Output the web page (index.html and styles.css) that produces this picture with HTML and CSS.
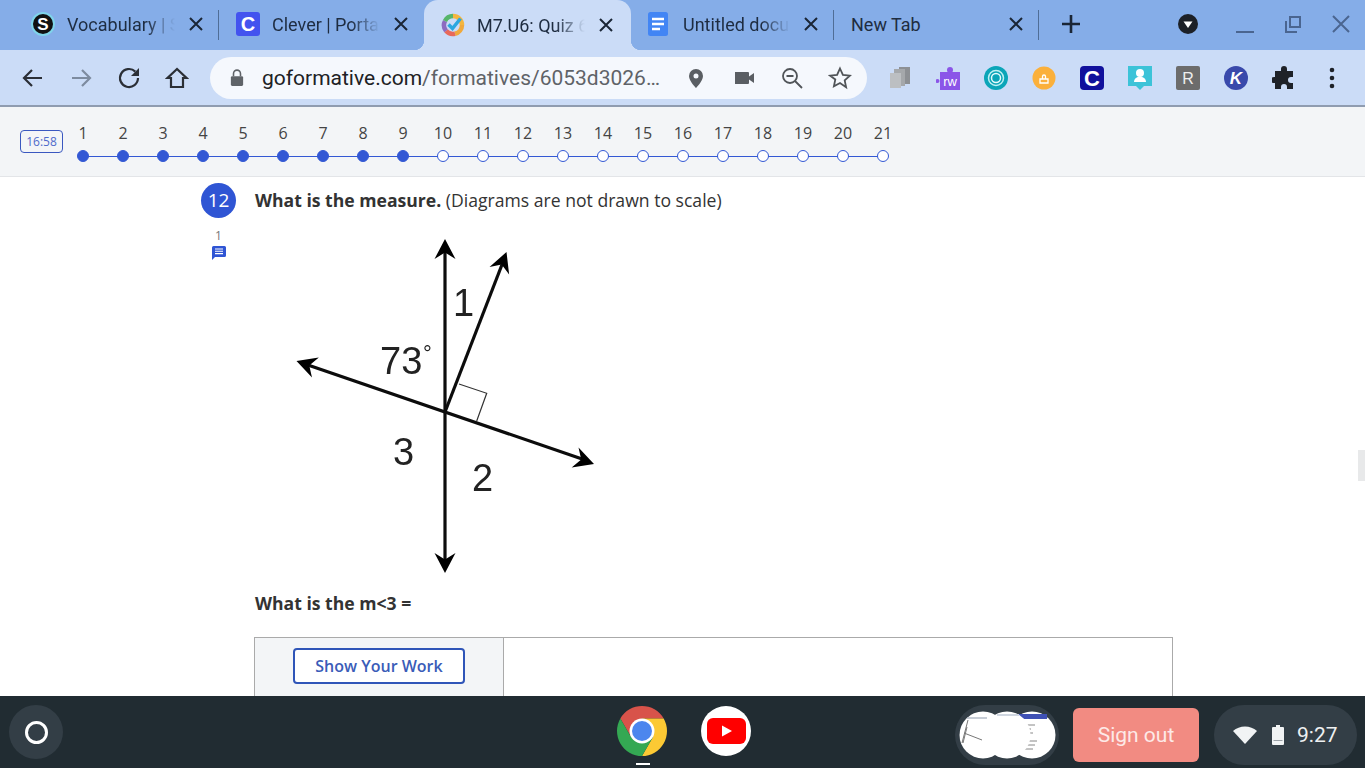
FILE: index.html
```html
<!DOCTYPE html>
<html lang="en">
<head>
<meta charset="utf-8">
<title>M7.U6: Quiz 6</title>
<link rel="stylesheet" href="styles.css">
</head>
<body>
<div class="screen">
  <header class="tabstrip">
    <div class="tab">
      <svg class="favicon" viewBox="0 0 24 24"><circle cx="12" cy="12" r="12" fill="#7fd4ea"/><circle cx="12" cy="12" r="10" fill="#111"/><text x="12" y="18" class="fav-s">S</text></svg>
      <span class="tab-title">Vocabulary | Scholastic</span>
      <svg class="tab-close" viewBox="0 0 14 14"><path d="M1 1l12 12M13 1L1 13"/></svg>
    </div>
    <div class="tab">
      <svg class="favicon" viewBox="0 0 24 24"><rect width="24" height="24" rx="3" fill="#4353ef"/><text x="12" y="19" class="fav-c">C</text></svg>
      <span class="tab-title">Clever | Portal</span>
      <svg class="tab-close" viewBox="0 0 14 14"><path d="M1 1l12 12M13 1L1 13"/></svg>
    </div>
    <div class="tab tab-active">
      <svg class="favicon" viewBox="0 0 24 24"><g fill="none" stroke-width="4.500"><path d="M12 3a9 9 0 0 1 9 9" stroke="#f4b63f"/><path d="M21 12a9 9 0 0 1-7 8.800" stroke="#f0a93c"/><path d="M14 20.800a9 9 0 0 1-9-3" stroke="#e8695a"/><path d="M5 17.800A9 9 0 0 1 4 8" stroke="#8c6bc0"/><path d="M4 8a9 9 0 0 1 8-5" stroke="#56b56a"/></g><path d="M7.500 11.500l4 4 8-10" fill="none" stroke="#2aa7e0" stroke-width="3.500"/></svg>
      <span class="tab-title">M7.U6: Quiz 6</span>
      <svg class="tab-close" viewBox="0 0 14 14"><path d="M1 1l12 12M13 1L1 13"/></svg>
    </div>
    <div class="tab">
      <svg class="favicon" viewBox="0 0 24 24"><rect x="2" width="20" height="24" rx="2.500" fill="#4285f4"/><path d="M6 7h12M6 12h12M6 17h8" stroke="#fff" stroke-width="2.600"/></svg>
      <span class="tab-title tab-title-shift">Untitled document</span>
      <svg class="tab-close" viewBox="0 0 14 14"><path d="M1 1l12 12M13 1L1 13"/></svg>
    </div>
    <div class="tab tab-new">
      <span class="tab-title">New Tab</span>
      <svg class="tab-close" viewBox="0 0 14 14"><path d="M1 1l12 12M13 1L1 13"/></svg>
    </div>
    <svg class="new-tab" viewBox="0 0 20 20"><path d="M10 1v18M1 10h18"/></svg>
    <svg class="tab-search" viewBox="0 0 20 20"><circle cx="10" cy="10" r="10" fill="#1c2027"/><path d="M5.500 7.500h9L10 14z" fill="#fff"/></svg>
    <div class="win-controls">
      <svg class="win-btn" viewBox="0 0 20 20"><path d="M1 18h18"/></svg>
      <svg class="win-btn" viewBox="0 0 20 20"><path d="M3 7v11h11M7 3h10v10H7z"/></svg>
      <svg class="win-btn" viewBox="0 0 20 20"><path d="M2 2l16 16M18 2L2 18"/></svg>
    </div>
  </header>

  <nav class="toolbar">
    <button class="tool"><svg viewBox="0 0 24 24"><path d="M21 12H4M11 4l-8 8 8 8"/></svg></button>
    <button class="tool tool-dim"><svg viewBox="0 0 24 24"><path d="M3 12h17M13 4l8 8-8 8"/></svg></button>
    <button class="tool"><svg viewBox="0 0 24 24"><path d="M21 12a9 9 0 1 1-2.700-6.400"/><path class="solid" d="M22 2v8h-8z"/></svg></button>
    <button class="tool"><svg viewBox="0 0 24 24"><path d="M12 3L2.500 12H6v9h12v-9h3.500z"/></svg></button>
    <div class="omnibox">
      <svg class="lock" viewBox="0 0 16 20"><path d="M4 8V5a4 4 0 0 1 8 0v3" fill="none" stroke="#5f6368" stroke-width="1.800"/><rect x="1" y="8" width="14" height="11" rx="1.500" fill="#5f6368"/></svg>
      <span class="url"><span class="url-host">goformative.com</span>/formatives/6053d3026…</span>
      <button class="tool omni-tool"><svg viewBox="0 0 24 24"><path class="solid" d="M12 3a7 7 0 0 0-7 7c0 5 7 12 7 12s7-7 7-12a7 7 0 0 0-7-7zm0 9.500a2.500 2.500 0 1 1 0-5 2.500 2.500 0 0 1 0 5z"/></svg></button>
      <button class="tool omni-tool"><svg viewBox="0 0 24 24"><path class="solid" d="M3 6h13a1 1 0 0 1 1 1v3.500L22 7v10l-5-3.500V17a1 1 0 0 1-1 1H3z"/></svg></button>
      <button class="tool omni-tool"><svg viewBox="0 0 24 24" class="thin"><circle cx="10" cy="10" r="7"/><path d="M15 15l7 7M6.500 10h7"/></svg></button>
      <button class="tool omni-tool"><svg viewBox="0 0 24 24" class="thin"><path d="M12 2.500l2.900 6.400 7 .8-5.200 4.700 1.400 6.900L12 17l-6.100 3.300 1.400-6.900L2.100 9.700l7-.8z"/></svg></button>
    </div>
    <div class="ext-row">
      <span class="ext"><svg viewBox="0 0 24 24"><rect x="11" y="1" width="11" height="17" fill="#8d9094"/><rect x="6" y="3" width="11" height="17" fill="#a5a8ab"/><rect x="2" y="7" width="11" height="15" fill="#bcbfc2"/></svg></span>
      <span class="ext"><svg viewBox="0 0 24 24"><rect x="4" y="6" width="20" height="18" fill="#8b55e8"/><circle cx="14" cy="4" r="3" fill="#8b55e8"/><circle cx="1.500" cy="15" r="2" fill="#8b55e8"/><text x="14" y="20" class="ext-rw">rw</text></svg></span>
      <span class="ext"><svg viewBox="0 0 24 24"><circle cx="12" cy="12" r="12" fill="#0ba5b8"/><circle cx="12" cy="12" r="7.500" fill="none" stroke="#bff0f3" stroke-width="1.500"/><circle cx="12" cy="12" r="4.500" fill="none" stroke="#e6fafb" stroke-width="1.500"/></svg></span>
      <span class="ext"><svg viewBox="0 0 24 24"><circle cx="12" cy="12" r="11.500" fill="#fbb03b"/><path d="M8 13h8v4H8zM10.500 13v-2.500a1.500 1.500 0 0 1 3 0V13" fill="none" stroke="#fff" stroke-width="1.300"/></svg></span>
      <span class="ext"><svg viewBox="0 0 24 24"><rect width="24" height="24" rx="4" fill="#10109c"/><text x="12" y="19.500" class="fav-c fav-c-large">C</text></svg></span>
      <span class="ext"><svg viewBox="0 0 24 24"><path d="M0 0h24v20h-8l-4 4-4-4H0z" fill="#3cc3d8"/><circle cx="12" cy="7" r="4" fill="#fff"/><path d="M6 16c0-7 12-7 12 0z" fill="#fff"/></svg></span>
      <span class="ext"><svg viewBox="0 0 24 24"><rect width="24" height="24" rx="2" fill="#6c6c6c"/><text x="12" y="18" class="ext-r">R</text></svg></span>
      <span class="ext"><svg viewBox="0 0 24 24"><circle cx="12" cy="12" r="12" fill="#3949ab"/><text x="12" y="18" class="ext-k">K</text></svg></span>
      <span class="ext"><svg viewBox="0 0 24 24"><path fill="#1e2228" d="M9 3a3 3 0 0 1 6 0v2h6v6h-2a3 3 0 0 0 0 6h2v6h-6v-2a3 3 0 0 0-6 0v2H3v-6h-1a3 3 0 0 1 0-6h1V5h6z"/></svg></span>
      <span class="ext"><svg viewBox="0 0 24 24"><circle cx="12" cy="4" r="2.300" fill="#1e2228"/><circle cx="12" cy="12" r="2.300" fill="#1e2228"/><circle cx="12" cy="20" r="2.300" fill="#1e2228"/></svg></span>
    </div>
  </nav>

  <section class="progress">
    <div class="timer">16:58</div>
    <ol class="steps">
      <li class="step done"><span class="num">1</span><span class="track"><i class="dot"></i></span></li>
      <li class="step done"><span class="num">2</span><span class="track"><i class="dot"></i></span></li>
      <li class="step done"><span class="num">3</span><span class="track"><i class="dot"></i></span></li>
      <li class="step done"><span class="num">4</span><span class="track"><i class="dot"></i></span></li>
      <li class="step done"><span class="num">5</span><span class="track"><i class="dot"></i></span></li>
      <li class="step done"><span class="num">6</span><span class="track"><i class="dot"></i></span></li>
      <li class="step done"><span class="num">7</span><span class="track"><i class="dot"></i></span></li>
      <li class="step done"><span class="num">8</span><span class="track"><i class="dot"></i></span></li>
      <li class="step done"><span class="num">9</span><span class="track"><i class="dot"></i></span></li>
      <li class="step"><span class="num">10</span><span class="track"><i class="dot"></i></span></li>
      <li class="step"><span class="num">11</span><span class="track"><i class="dot"></i></span></li>
      <li class="step"><span class="num">12</span><span class="track"><i class="dot"></i></span></li>
      <li class="step"><span class="num">13</span><span class="track"><i class="dot"></i></span></li>
      <li class="step"><span class="num">14</span><span class="track"><i class="dot"></i></span></li>
      <li class="step"><span class="num">15</span><span class="track"><i class="dot"></i></span></li>
      <li class="step"><span class="num">16</span><span class="track"><i class="dot"></i></span></li>
      <li class="step"><span class="num">17</span><span class="track"><i class="dot"></i></span></li>
      <li class="step"><span class="num">18</span><span class="track"><i class="dot"></i></span></li>
      <li class="step"><span class="num">19</span><span class="track"><i class="dot"></i></span></li>
      <li class="step"><span class="num">20</span><span class="track"><i class="dot"></i></span></li>
      <li class="step"><span class="num">21</span><span class="track"><i class="dot"></i></span></li>
    </ol>
  </section>

  <main class="content">
    <aside class="qside">
      <div class="qbadge">12</div>
      <div class="qcount">1</div>
      <svg class="qcomment" viewBox="0 0 14 14"><path d="M1.500 0h11A1.500 1.500 0 0 1 14 1.500v8a1.500 1.500 0 0 1-1.500 1.500H3l-3 3V1.500A1.500 1.500 0 0 1 1.500 0z" fill="#2f55d4"/><path d="M3 3h8M3 5.300h8M3 7.600h8" stroke="#fff" stroke-width="1.100"/></svg>
    </aside>
    <div class="qbody">
      <p class="qtitle"><strong>What is the measure.</strong> (Diagrams are not drawn to scale)</p>
      <svg class="diagram" viewBox="285 235 320 345">
        <defs><path id="head" d="M0 0L-10.500 20L0 13.500L10.500 20Z"/></defs>
        <g class="diagram-lines">
          <path d="M445 248V564"/>
          <path d="M445 412L503 262"/>
          <path d="M305 364L585 460"/>
        </g>
        <path class="diagram-square" d="M459 384L486.700 393.300L476.700 421"/>
        <use href="#head" transform="translate(445 239)"/>
        <use href="#head" transform="translate(445 573) rotate(180)"/>
        <use href="#head" transform="translate(506.500 252) rotate(21)"/>
        <use href="#head" transform="translate(296.500 361) rotate(-71)"/>
        <use href="#head" transform="translate(594 464) rotate(109)"/>
        <text x="453" y="316" class="diagram-label">1</text>
        <text x="380" y="374" class="diagram-label">73</text>
        <text x="423" y="361" class="diagram-deg">°</text>
        <text x="393" y="465" class="diagram-label">3</text>
        <text x="472" y="491" class="diagram-label">2</text>
      </svg>
      <p class="qprompt">What is the m&lt;3 =</p>
      <div class="answer">
        <div class="answer-side"><button class="work-btn">Show Your Work</button></div>
        <div class="answer-main"></div>
      </div>
    </div>
    <div class="scroll-tab"></div>
  </main>

  <footer class="shelf">
    <div class="launcher"><div class="launcher-disc"><i class="launcher-ring"></i></div></div>
    <div class="app app-chrome">
      <svg viewBox="0 0 50 50"><path d="M3.350 12.500A25 25 0 0 1 46.650 12.500L25 12.500L14.175 31.250Z" fill="#d8534a"/><path d="M46.650 12.500A25 25 0 0 1 25 50L35.825 31.250L25 12.500Z" fill="#fcc934"/><path d="M25 50A25 25 0 0 1 3.350 12.500L14.175 31.250L35.825 31.250Z" fill="#34a853"/><circle cx="25" cy="25" r="12.500" fill="#fff"/><circle cx="25" cy="25" r="10" fill="#4c86ee"/></svg>
      <i class="app-running"></i>
    </div>
    <div class="app app-youtube">
      <svg viewBox="0 0 50 50"><circle cx="25" cy="25" r="25" fill="#fff"/><rect x="6" y="12" width="39" height="26" rx="6" fill="#f00"/><path d="M21 19.500l10 5.500-10 5.500z" fill="#fff"/></svg>
    </div>
    <div class="previews">
      <svg viewBox="0 0 104 60">
        <circle cx="77" cy="30" r="23.500" fill="#fff"/>
        <path d="M62 9h30v5H62z" fill="#3f51b5"/>
        <path d="M66 20h14M66 24h10M66 28h12M68 36h14M68 40h12M68 44h10" stroke="#888" stroke-width="1"/>
        <circle cx="67" cy="42" r="1.800" fill="#222"/>
        <circle cx="52" cy="30" r="23.500" fill="#fff"/>
        <path d="M42 10h22" stroke="#cfd6e0" stroke-width="2"/>
        <circle cx="28" cy="30" r="23.500" fill="#fff"/>
        <path d="M13 15L7 38M9 28L27 35M12 22L8 38" stroke="#777" stroke-width="1" fill="none"/>
        <path d="M12 13h20" stroke="#b5bcc8" stroke-width="1.500"/>
      </svg>
    </div>
    <button class="signout">Sign out</button>
    <div class="status">
      <svg class="wifi" viewBox="0 0 24 18"><path d="M12 18L0 5a18 18 0 0 1 24 0z" fill="#f1f3f4"/></svg>
      <svg class="battery" viewBox="0 0 12 20"><path d="M4 0h4v2h3a1 1 0 0 1 1 1v16a1 1 0 0 1-1 1H1a1 1 0 0 1-1-1V3a1 1 0 0 1 1-1h3z" fill="#f1f3f4"/><rect x="1.500" y="15" width="9" height="1" fill="#9aa0a6"/></svg>
      <span class="clock">9:27</span>
    </div>
  </footer>
</div>
</body>
</html>
```

FILE: styles.css
```css
* { box-sizing: border-box; }
html, body { margin: 0; padding: 0; }
body { overflow: hidden; background: #fff; font-family: "Open Sans", "Liberation Sans", sans-serif; }
button { font: inherit; border: 0; background: none; padding: 0; }
p, ol { margin: 0; padding: 0; }
ol { list-style: none; }

.screen { width: 1365px; height: 768px; display: flex; flex-direction: column; overflow: hidden; position: relative; }

/* tab strip */
.tabstrip { height: 50px; flex: none; background: #85ade8; display: flex; align-items: center; padding: 0 0 2px 14px; color: #1e2c40; font-family: Roboto, "Liberation Sans", sans-serif; }
.tab { width: 205px; height: 48px; flex: none; display: flex; align-items: center; padding: 0 16.500px 0 17px; position: relative; }
.tab:nth-child(1)::after, .tab:nth-child(4)::after, .tab:nth-child(5)::after { content: ""; position: absolute; right: 0; top: 10px; width: 1px; height: 30px; background: #4f6d96; }
.tab-active { width: 207px; height: 50px; margin: 0 -2px 0 0; padding-right: 18.500px; top: 1px; background: #cbdcf7; border-radius: 14px 14px 0 0; z-index: 1; }
.tab-active::before, .tab-active::after { content: ""; position: absolute; bottom: 0; width: 10px; height: 10px; }
.tab-active::before { left: -10px; background: radial-gradient(circle at 0 0, transparent 10px, #cbdcf7 10.500px); }
.tab-active::after { right: -10px; background: radial-gradient(circle at 100% 0, transparent 10px, #cbdcf7 10.500px); }
.tab-new { padding-left: 17px; }
.favicon { width: 24px; height: 24px; flex: none; margin-right: 12px; }
.tab-title-shift { margin-left: 1px; }
.tab-title { flex: 1; min-width: 0; margin-right: 12px; font-size: 18px; white-space: nowrap; overflow: hidden; -webkit-mask-image: linear-gradient(90deg, #000 72%, transparent 98%); mask-image: linear-gradient(90deg, #000 72%, transparent 98%); }
.tab-new .tab-title { -webkit-mask-image: none; mask-image: none; }
.tab-close { width: 14px; height: 14px; flex: none; fill: none; stroke: #1a2636; stroke-width: 2; }
.fav-s { font: 700 17px "Liberation Sans", sans-serif; fill: #fff; text-anchor: middle; }
.fav-c { font: 700 20px "Liberation Sans", sans-serif; fill: #fff; text-anchor: middle; }
.fav-c-large { font-size: 22px; }
.new-tab { width: 20px; height: 20px; margin-left: 22px; fill: none; stroke: #1a2636; stroke-width: 2.600; flex: none; }
.tab-search { width: 20px; height: 20px; margin-left: 97px; flex: none; }
.win-controls { display: flex; flex: none; margin-left: 37px; }
.win-btn { width: 20px; height: 20px; margin-right: 28px; fill: none; stroke: #4a6590; stroke-width: 2; flex: none; }

/* toolbar */
.toolbar { height: 57px; flex: none; background: #cbdcf7; border-bottom: 2px solid #8f9cb0; display: flex; align-items: center; padding-left: 9px; }
.tool { width: 48px; height: 42px; display: flex; align-items: center; justify-content: center; flex: none; }
.tool svg { width: 24px; height: 24px; fill: none; stroke: #2b2f36; stroke-width: 2.200; }
.tool .solid { fill: #2b2f36; stroke: none; }
.tool-dim svg { stroke: #7d8b9f; }
.omnibox { width: 657px; height: 42px; margin-left: 9px; background: #f5f8fd; border-radius: 21px; display: flex; align-items: center; padding: 0 3px 0 20px; }
.lock { width: 14px; height: 18px; flex: none; }
.url { flex: 1; min-width: 0; margin-left: 18px; font-family: Roboto, "Liberation Sans", sans-serif; font-size: 21px; color: #5f6368; white-space: nowrap; overflow: hidden; }
.url-host { color: #202124; }
.omni-tool svg { fill: none; stroke: none; }
.omni-tool .solid { fill: #5a5e63; }
.omni-tool .thin { stroke: #505458; stroke-width: 1.800; }
.ext-row { display: flex; margin-left: 9px; }
.ext { width: 48px; height: 42px; display: flex; align-items: center; justify-content: center; }
.ext svg { width: 24px; height: 24px; }
.ext-rw { font: 400 13px "Liberation Sans", sans-serif; fill: #fff; text-anchor: middle; }
.ext-r { font: 400 16px "Liberation Sans", sans-serif; fill: #eee; text-anchor: middle; }
.ext-k { font: italic 700 17px "Liberation Sans", sans-serif; fill: #fff; text-anchor: middle; }

/* progress bar */
.progress { height: 70px; flex: none; background: #f3f5f7; border-bottom: 1px solid #e3e5e8; display: flex; align-items: flex-start; padding: 16px 0 0 20px; }
.timer { width: 43px; height: 23px; margin-top: 7px; border: 1px solid #3a58c0; border-radius: 4px; font-size: 12px; line-height: 21px; text-align: center; color: #4f6bcb; flex: none; }
.steps { display: flex; }
.step { width: 40px; display: flex; flex-direction: column; align-items: center; }
.num { height: 20px; font-size: 16px; line-height: 20px; color: #444; }
.track { width: 40px; height: 12px; margin-top: 7px; display: flex; justify-content: center; background: linear-gradient(#3358d4, #3358d4) center / 100% 1px no-repeat; }
.step:first-child .track { background-position: right center; background-size: 50% 1px; }
.step:last-child .track { background-position: left center; background-size: 50% 1px; }
.dot { width: 12px; height: 12px; border-radius: 50%; background: #fff; border: 1px solid #3358d4; }
.done .dot { background: #3358d4; }

/* question */
.content { flex: 1; min-height: 0; overflow: hidden; display: flex; align-items: flex-start; padding: 6px 0 0 201px; background: #fff; color: #333; position: relative; }
.qside { width: 35px; flex: none; display: flex; flex-direction: column; align-items: center; margin-right: 19px; }
.qbadge { width: 35px; height: 35px; border-radius: 50%; background: #2f55d4; color: #fff; font-size: 19px; line-height: 35px; text-align: center; }
.qcount { margin-top: 10px; height: 16px; font-size: 12px; line-height: 16px; color: #777; }
.qcomment { width: 14px; height: 14px; margin-top: 2px; }
.qbody { flex: none; width: 918px; }
.qtitle { font-size: 17.600px; line-height: 35px; }
.diagram { display: block; width: 320px; height: 345px; margin: 17px 0 0 30px; filter: blur(0.4px); }
.diagram-lines { fill: none; stroke: #0c0c0c; stroke-width: 3.200; }
.diagram-square { fill: none; stroke: #333; stroke-width: 1.200; }
.diagram-label { font: 400 38px "Liberation Sans", sans-serif; fill: #222; }
.diagram-deg { font: 400 22px "Liberation Sans", sans-serif; fill: #222; }
.qprompt { font-size: 17.600px; font-weight: 700; line-height: 24px; margin-top: 11px; }
.answer { display: flex; width: 919px; height: 80px; margin: 22px 0 0 -1px; border: 1px solid #aaa; }
.answer-side { width: 249px; background: #f3f5f7; border-right: 1px solid #aaa; padding: 10px 0 0 38px; flex: none; }
.answer-main { flex: 1; }
.work-btn { width: 172px; height: 36px; border: 2px solid #2f55b8; border-radius: 4px; background: #fff; color: #3a5cb8; font-family: "Open Sans", sans-serif; font-size: 16px; font-weight: 600; }
.scroll-tab { position: absolute; right: 0; top: 273px; width: 7px; height: 31px; background: #e8e9ea; }

/* shelf */
.shelf { height: 72px; flex: none; background: #212c32; display: flex; align-items: flex-start; font-family: Roboto, "Liberation Sans", sans-serif; }
.launcher { width: 72px; height: 72px; flex: none; display: flex; align-items: center; justify-content: center; }
.launcher-disc { width: 54px; height: 54px; border-radius: 50%; background: #333e46; display: flex; align-items: center; justify-content: center; }
.launcher-ring { width: 23px; height: 23px; border: 3.500px solid #fff; border-radius: 50%; }
.app { width: 50px; height: 50px; margin-top: 10px; flex: none; position: relative; }
.app svg { display: block; width: 50px; height: 50px; }
.app-chrome { margin-left: 545px; }
.app-youtube { margin-left: 34px; }
.app-running { position: absolute; left: 19px; top: 57px; width: 14px; height: 2px; background: #fff; }
.previews { width: 104px; height: 60px; margin: 9px 0 0 204px; background: #333e46; border-radius: 30px; flex: none; }
.previews svg { display: block; width: 104px; height: 60px; }
.signout { width: 126px; height: 54px; margin: 12px 0 0 14px; border-radius: 6px; background: #f28b82; color: #fde9e7; font-family: Roboto, sans-serif; font-size: 21px; flex: none; }
.status { width: 143px; height: 60px; margin: 9px 0 0 15px; border-radius: 30px; background: #333e46; display: flex; align-items: center; padding-left: 19px; flex: none; }
.wifi { width: 24px; height: 18px; flex: none; }
.battery { width: 12px; height: 20px; margin-left: 15px; flex: none; }
.clock { margin-left: 13px; font-size: 21px; color: #eef0f1; }
```
